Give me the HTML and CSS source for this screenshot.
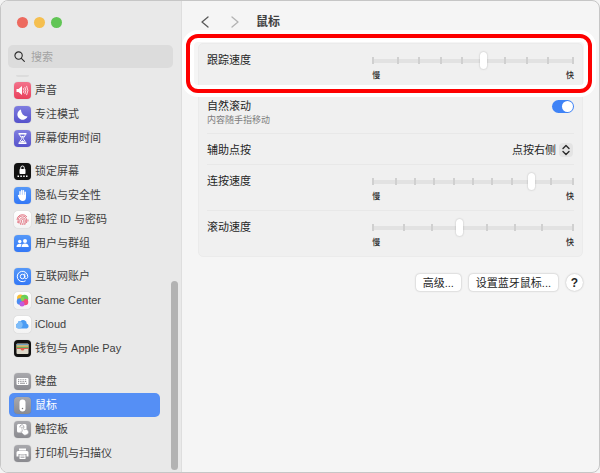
FILE: index.html
```html
<!DOCTYPE html>
<html lang="zh-CN">

<head>
    <meta charset="UTF-8">
    <meta name="viewport" content="width=device-width, initial-scale=1.0">
    <title>鼠标</title>
    <link rel="stylesheet" href="styles.css">
</head>

<body>
    <div class="window">
        <aside class="sidebar">
            <div class="lights">
                <button type="button" class="light red" aria-label="关闭"></button>
                <button type="button" class="light yellow" aria-label="最小化"></button>
                <button type="button" class="light green" aria-label="缩放"></button>
            </div>

            <div class="search">
                <svg viewBox="0 0 12 12"><circle cx="5" cy="5" r="4"/><path d="M8 8l3.3 3.3"/></svg>
                <input type="search" placeholder="搜索" aria-label="搜索">
            </div>

            <nav class="list">
                <div class="cut-item"></div>
                <ul>
                    <li><a href="#">
                        <svg class="icon pink" viewBox="0 0 34 34"><path fill="#fff" d="M5 14h4l7-6v18l-7-6H5z"/><path class="line" stroke-width="1.6" d="M19 13q2.500 4 0 8M22 10.500q4 6.500 0 13M25.500 8.500q5 8.500 0 17"/></svg>
                        声音</a></li>
                    <li><a href="#">
                        <svg class="icon purple" viewBox="0 0 34 34"><path fill="#fff" d="M14 7A10.500 10.500 0 1 0 27 21A13 13 0 0 1 14 7z"/></svg>
                        专注模式</a></li>
                    <li><a href="#">
                        <svg class="icon purple" viewBox="0 0 34 34"><path fill="#fff" d="M9 6h16v3H9zM9 25h16v3H9z"/><path class="line" stroke-width="2" d="M11.500 9c0 5 4 5.500 4 8s-4 3-4 8M22.500 9c0 5-4 5.500-4 8s4 3 4 8"/><path fill="#fff" d="M13 25c0-3 4-3 4-5 0 2 4 2 4 5zM14 12h6l-3 4z"/></svg>
                        屏幕使用时间</a></li>
                </ul>
                <ul>
                    <li><a href="#">
                        <svg class="icon black" viewBox="0 0 34 34"><rect x="11" y="12" width="12" height="10" rx="1.500" fill="#fff"/><path class="line" stroke-width="2" d="M13.500 13V9.500a3.500 3.500 0 0 1 7 0V13"/><path fill="#fff" d="M7 25h3v3H7zM12.700 25h3v3h-3zM18.400 25h3v3h-3zM24 25h3v3h-3z"/></svg>
                        锁定屏幕</a></li>
                    <li><a href="#">
                        <svg class="icon blue" viewBox="0 0 34 34"><path class="line" stroke-width="2.800" d="M12 18V9.500M15.500 17V7M19 17V7.500M22.500 18v-7.500M9 17l3 5"/><path fill="#fff" d="M10.600 15.500h13.300v5c0 5-2.500 7.500-6.500 7.500-4.500 0-6-2.500-8.500-8z"/></svg>
                        隐私与安全性</a></li>
                    <li><a href="#">
                        <svg class="icon white" viewBox="0 0 34 34"><g class="finger"><path d="M8 12a11 11 0 0 1 18 0M6 18q0-7 6-9M10 25q-3-6-1-10a8.500 8.500 0 0 1 16 1q1 4 0 8M14 28q-4-7-2-11a5.500 5.500 0 0 1 10.500 1q.5 5-.5 9M18 28q-4-5-3-9.500a2.300 2.300 0 0 1 4.500 0q0 5 1 9M7 21l1 3M28 17v4"/></g></svg>
                        触控 ID 与密码</a></li>
                    <li><a href="#">
                        <svg class="icon blue" viewBox="0 0 34 34"><g fill="#fff"><circle cx="11.500" cy="13" r="3.500"/><circle cx="22" cy="12" r="4"/><path d="M5 24c0-5 3-6.500 6.500-6.500 1.500 0 3 .5 4 1.300C14 20 13.500 22 13.500 24zM15 24c0-5 3-7 7-7s7.500 2 7.500 7z"/></g></svg>
                        用户与群组</a></li>
                </ul>
                <ul>
                    <li><a href="#">
                        <svg class="icon blue" viewBox="0 0 34 34"><circle class="line" cx="17" cy="17" r="4.500" stroke-width="2"/><path class="line" stroke-width="2" d="M21.500 12v7c0 4 6 3 6-2a10.500 10.500 0 1 0-5 9"/></svg>
                        互联网账户</a></li>
                    <li><a href="#">
                        <svg class="icon white" viewBox="0 0 34 34"><circle cx="13" cy="12" r="7" fill="#f7bd35"/><circle cx="21" cy="13" r="7.500" fill="#66cf58"/><circle cx="12" cy="19" r="6.500" fill="#4a8df2"/><circle cx="22" cy="20" r="6.500" fill="#f34c7b"/><circle cx="16" cy="24" r="5" fill="#c15be0"/><circle cx="17" cy="14" r="4" fill="#8bd34d"/></svg>
                        Game Center</a></li>
                    <li><a href="#">
                        <svg class="icon white" viewBox="0 0 34 34"><path fill="#4b9cf3" d="M9 25a5.500 5.500 0 0 1-1.500-10.700 4.500 4.500 0 0 1 5.500-4 7.300 7.300 0 0 1 12.500 5.200A5 5 0 0 1 26 25z"/><path fill="#7ebcf8" d="M9 25a5.500 5.500 0 0 1-1.500-10.700 4.500 4.500 0 0 1 5.500-4q5 2 4.500 7T13 25z"/></svg>
                        iCloud</a></li>
                    <li><a href="#">
                        <svg class="icon black" viewBox="0 0 34 34"><rect x="5" y="7" width="24" height="21" rx="2" fill="#dcd8ca"/><path fill="#6f9fc0" d="M5 8h24v3H5z"/><path fill="#e8b246" d="M5 11h24v2.500H5z"/><path fill="#6fae61" d="M5 13.500h24V16H5z"/><path fill="#e0604f" d="M5 16h24v2h-8q-1 3-4 3t-4-3H5z"/></svg>
                        钱包与 Apple Pay</a></li>
                </ul>
                <ul>
                    <li><a href="#">
                        <svg class="icon gray" viewBox="0 0 34 34"><rect x="5" y="10" width="24" height="14" rx="2" fill="#fff"/><path stroke="#929297" stroke-width="2" stroke-dasharray="2 1.500" d="M8 13.500h18M8 17h18"/><path stroke="#929297" stroke-width="2" d="M8 20.500h2M12 20.500h10M24 20.500h2"/></svg>
                        键盘</a></li>
                    <li><a href="#" class="active" aria-current="page">
                        <svg class="icon gray" viewBox="0 0 34 34"><rect x="11" y="5" width="12" height="24" rx="6" fill="#fff"/><circle cx="17" cy="23" r="1.500" fill="#77777b"/></svg>
                        鼠标</a></li>
                    <li><a href="#">
                        <svg class="icon gray" viewBox="0 0 34 34"><rect x="6" y="6" width="19" height="17" rx="3" fill="#fff"/><path fill="none" stroke="#929297" stroke-width="1.500" d="M12 13a4 4 0 1 1 6 2"/><path fill="#fff" stroke="#929297" d="M15 12.500q2-1.500 3 1l2 4q5-2 8 1 3 5-1 8-6 4-9 0l-4-5q0-2 3-1z"/></svg>
                        触控板</a></li>
                    <li><a href="#">
                        <svg class="icon gray" viewBox="0 0 34 34"><path fill="#fff" d="M10 7h14v4H10zM8 12h18q3 0 3 3v8h-4v-5H9v5H5v-8q0-3 3-3z"/><rect x="11" y="19" width="12" height="9" fill="#fff"/><path stroke="#929297" stroke-width="1.300" d="M13 22h8M13 25h8"/></svg>
                        打印机与扫描仪</a></li>
                </ul>
            </nav>
            <div class="scrollbar"></div>
        </aside>

        <main class="content">
            <header class="toolbar">
                <button type="button" class="nav-btn" aria-label="后退"><svg viewBox="0 0 8 12"><path d="M7 1L1 6l6 5"/></svg></button>
                <button type="button" class="nav-btn forward" aria-label="前进" disabled><svg viewBox="0 0 8 12"><path d="M1 1l6 5-6 5"/></svg></button>
                <h1>鼠标</h1>
            </header>

            <section class="card">
                <div class="row slider-row marked">
                    <label for="tracking">跟踪速度</label>
                    <div class="slider">
                        <div class="track">
                            <div class="ticks"><i></i><i></i><i></i><i></i><i></i><i></i><i></i><i></i><i></i><i></i></div>
                            <input type="range" id="tracking" min="0" max="9" value="5">
                        </div>
                        <div class="ends"><span>慢</span><span>快</span></div>
                    </div>
                </div>
                <div class="row toggle-row">
                    <label for="natural">自然滚动<small>内容随手指移动</small></label>
                    <input type="checkbox" class="toggle" id="natural" checked>
                </div>
                <div class="row select-row">
                    <label for="secondary">辅助点按</label>
                    <div class="select">
                        <select id="secondary">
                            <option>点按右侧</option>
                            <option>点按左侧</option>
                        </select>
                        <svg viewBox="0 0 14 14"><path d="M4 5.500l3-3 3 3M4 8.500l3 3 3-3"/></svg>
                    </div>
                </div>
                <div class="row slider-row">
                    <label for="double-click">连按速度</label>
                    <div class="slider">
                        <div class="track">
                            <div class="ticks"><i></i><i></i><i></i><i></i><i></i><i></i><i></i><i></i><i></i><i></i><i></i></div>
                            <input type="range" id="double-click" min="0" max="10" value="8">
                        </div>
                        <div class="ends"><span>慢</span><span>快</span></div>
                    </div>
                </div>
                <div class="row slider-row">
                    <label for="scrolling">滚动速度</label>
                    <div class="slider">
                        <div class="track">
                            <div class="ticks"><i></i><i></i><i></i><i></i><i></i><i></i><i></i><i></i></div>
                            <input type="range" id="scrolling" min="0" max="7" value="3">
                        </div>
                        <div class="ends"><span>慢</span><span>快</span></div>
                    </div>
                </div>
            </section>

            <footer class="actions">
                <button type="button">高级...</button>
                <button type="button">设置蓝牙鼠标...</button>
                <button type="button" class="help" aria-label="帮助">?</button>
            </footer>
        </main>
    </div>
</body>

</html>
```
FILE: styles.css
```css
*{
    box-sizing: border-box;
    padding: 0;
    margin: 0;
}

body{
    background-color: #f4f4f4;
    color: #262626;
    font-family: "Liberation Sans", "Noto Sans CJK SC", sans-serif;
    font-size: 11px;
    line-height: 16px;
}

button, input, select{
    font: inherit;
    color: inherit;
    border: none;
}

.window{
    display: flex;
    min-height: 100vh;
    border: 1px solid #c6c6c6;
    border-radius: 8px;
    overflow: hidden;
    background-color: #f5f5f5;
}

/* sidebar */
.sidebar{
    position: relative;
    width: 181px;
    flex: none;
    padding: 16px 8px 7px 7px;
    background-color: #e9e9e9;
    border-right: 1px solid #dedede;
}

.lights{
    display: flex;
    gap: 6px;
    padding-left: 9px;
}

.light{
    width: 11px;
    height: 11px;
    border-radius: 50%;
}

.red{
    background-color: #ed6a5f;
}

.yellow{
    background-color: #f5bf4f;
}

.green{
    background-color: #61c555;
}

.search{
    display: flex;
    align-items: center;
    gap: 6px;
    height: 23px;
    margin-top: 17px;
    padding: 0 6px;
    border-radius: 5px;
    background-color: #dcdcdc;
}

.search svg{
    width: 11px;
    height: 11px;
    fill: none;
    stroke: #2b2b2b;
    stroke-width: 1.2;
    stroke-linecap: round;
}

.search input{
    flex: 1;
    min-width: 0;
    background: none;
    outline: none;
}

.search input::placeholder{
    color: #a3a3a3;
}

.list{
    display: flex;
    flex-direction: column;
    gap: 9px;
    padding: 7px 13px 0 1px;
    color: #3e3e3e;
}

/* lower edge of the item scrolled out of view */
.cut-item{
    width: 13px;
    height: 2px;
    margin: 0 0 -8px 7px;
    border-radius: 0 0 4px 4px;
    background-color: #dcdcdc;
}

.list ul{
    list-style: none;
}

.list a{
    display: flex;
    align-items: center;
    gap: 4px;
    height: 24px;
    padding-left: 5px;
    border-radius: 5px;
    color: inherit;
    text-decoration: none;
    white-space: nowrap;
}

.list a.active{
    background-color: #558ff5;
    color: white;
}

.icon{
    width: 17px;
    height: 17px;
    flex: none;
    border-radius: 4px;
    box-shadow: 0 0 1px rgba(0, 0, 0, 0.3);
}

.line{
    fill: none;
    stroke: white;
    stroke-linecap: round;
}

.finger{
    fill: none;
    stroke: #e2707f;
    stroke-width: 1.8;
}

.pink{
    background: linear-gradient(#f3738c, #e9405b);
}

.purple{
    background: linear-gradient(#7f7de0, #5552cb);
}

.black{
    background-color: #111111;
}

.blue{
    background: linear-gradient(#5598f8, #3478f6);
}

.white{
    background: linear-gradient(#ffffff, #f3f3f3);
}

.gray{
    background: linear-gradient(#a9a9ad, #8a8a8f);
}

.scrollbar{
    position: absolute;
    top: 280px;
    right: 3px;
    bottom: 2px;
    width: 7px;
    border-radius: 4px;
    background-color: #b3b3b3;
}

/* main pane */
.content{
    flex: 1;
    min-width: 0;
    padding: 11px 16px;
}

.toolbar{
    display: flex;
    align-items: center;
    gap: 22px;
    height: 20px;
    padding-left: 3px;
}

.toolbar h1{
    margin-left: -5px;
    font-size: 12px;
    font-weight: bold;
    color: #404040;
}

.nav-btn{
    display: flex;
    background: none;
}

.nav-btn svg{
    width: 8px;
    height: 12px;
    fill: none;
    stroke: #5a5a5a;
    stroke-width: 1.3;
    stroke-linecap: round;
    stroke-linejoin: round;
}

.forward svg{
    stroke: #b3b3b3;
}

.card{
    margin-top: 11px;
    padding: 0 8px;
    border: 1px solid #ebebeb;
    border-radius: 5px;
    background-color: #f0f0f0;
}

.row{
    display: flex;
    justify-content: space-between;
    border-bottom: 1px solid #e8e8e8;
}

.row:last-child{
    border-bottom: none;
}

.row label{
    display: block;
}

.slider-row{
    padding: 8px 0 7px;
}

.toggle-row{
    padding: 8px 0 7px;
}

.toggle-row small{
    display: block;
    font-size: 9px;
    line-height: 12px;
    color: #7d7d7d;
}

.select-row{
    align-items: center;
    padding: 8px 0 6px;
}

/* red frame around the setting being pointed out */
.marked{
    position: relative;
}

.marked::after{
    content: "";
    position: absolute;
    inset: -10px -18px -4px -21px;
    border: 4px solid #fe0000;
    border-radius: 12px;
    box-shadow: 0 0 0 4px white, inset 0 0 0 4px white;
    pointer-events: none;
}

.slider{
    width: 55%;
}

.track{
    position: relative;
    display: flex;
    align-items: center;
    height: 17px;
}

.track::before{
    content: "";
    position: absolute;
    width: 100%;
    height: 4px;
    border-radius: 2px;
    background-color: #e2e2e2;
}

.ticks{
    position: absolute;
    display: flex;
    justify-content: space-between;
    width: 100%;
}

.ticks i{
    width: 2px;
    height: 7px;
    background-color: #d0d0d0;
}

/* end ticks reach past the thumb's travel */
.ticks i:first-child{
    width: 5px;
    border-left: 2px solid #d0d0d0;
    background: none;
}

.ticks i:last-child{
    width: 5px;
    border-right: 2px solid #d0d0d0;
    background: none;
}

.track input{
    position: relative;
    width: 100%;
    height: 17px;
    appearance: none;
    background: none;
}

.track input::-webkit-slider-thumb{
    appearance: none;
    width: 7px;
    height: 17px;
    border-radius: 4px;
    background-color: white;
    box-shadow: 0 0 2px rgba(0, 0, 0, 0.25);
}

.ends{
    display: flex;
    justify-content: space-between;
    padding-top: 1px;
    font-size: 8px;
    font-weight: 500;
    line-height: 12px;
}

.toggle{
    width: 22px;
    height: 13px;
    margin-top: 2px;
    padding: 1px;
    appearance: none;
    border-radius: 7px;
    background-color: #c9c9c9;
}

.toggle::before{
    content: "";
    display: block;
    width: 11px;
    height: 11px;
    border-radius: 50%;
    background-color: white;
}

.toggle:checked{
    background-color: #3f83f6;
}

.toggle:checked::before{
    margin-left: auto;
}

.select{
    position: relative;
    margin-right: 1px;
}

.select select{
    display: block;
    height: 16px;
    padding-right: 17px;
    appearance: none;
    background: none;
}

.select svg{
    position: absolute;
    top: 1px;
    right: 0;
    width: 14px;
    height: 14px;
    border-radius: 4px;
    background-color: #e4e4e4;
    fill: none;
    stroke: #2b2b2b;
    stroke-width: 1.4;
    stroke-linecap: round;
    stroke-linejoin: round;
    pointer-events: none;
}

.actions{
    display: flex;
    justify-content: flex-end;
    gap: 8px;
    padding-top: 17px;
}

.actions button{
    height: 17px;
    padding: 0 7px;
    border-radius: 4px;
    background-color: white;
    box-shadow: 0 0 2px rgba(0, 0, 0, 0.3);
}

.actions .help{
    width: 17px;
    padding: 0;
    border-radius: 50%;
    font-size: 12px;
    font-weight: bold;
}
```
